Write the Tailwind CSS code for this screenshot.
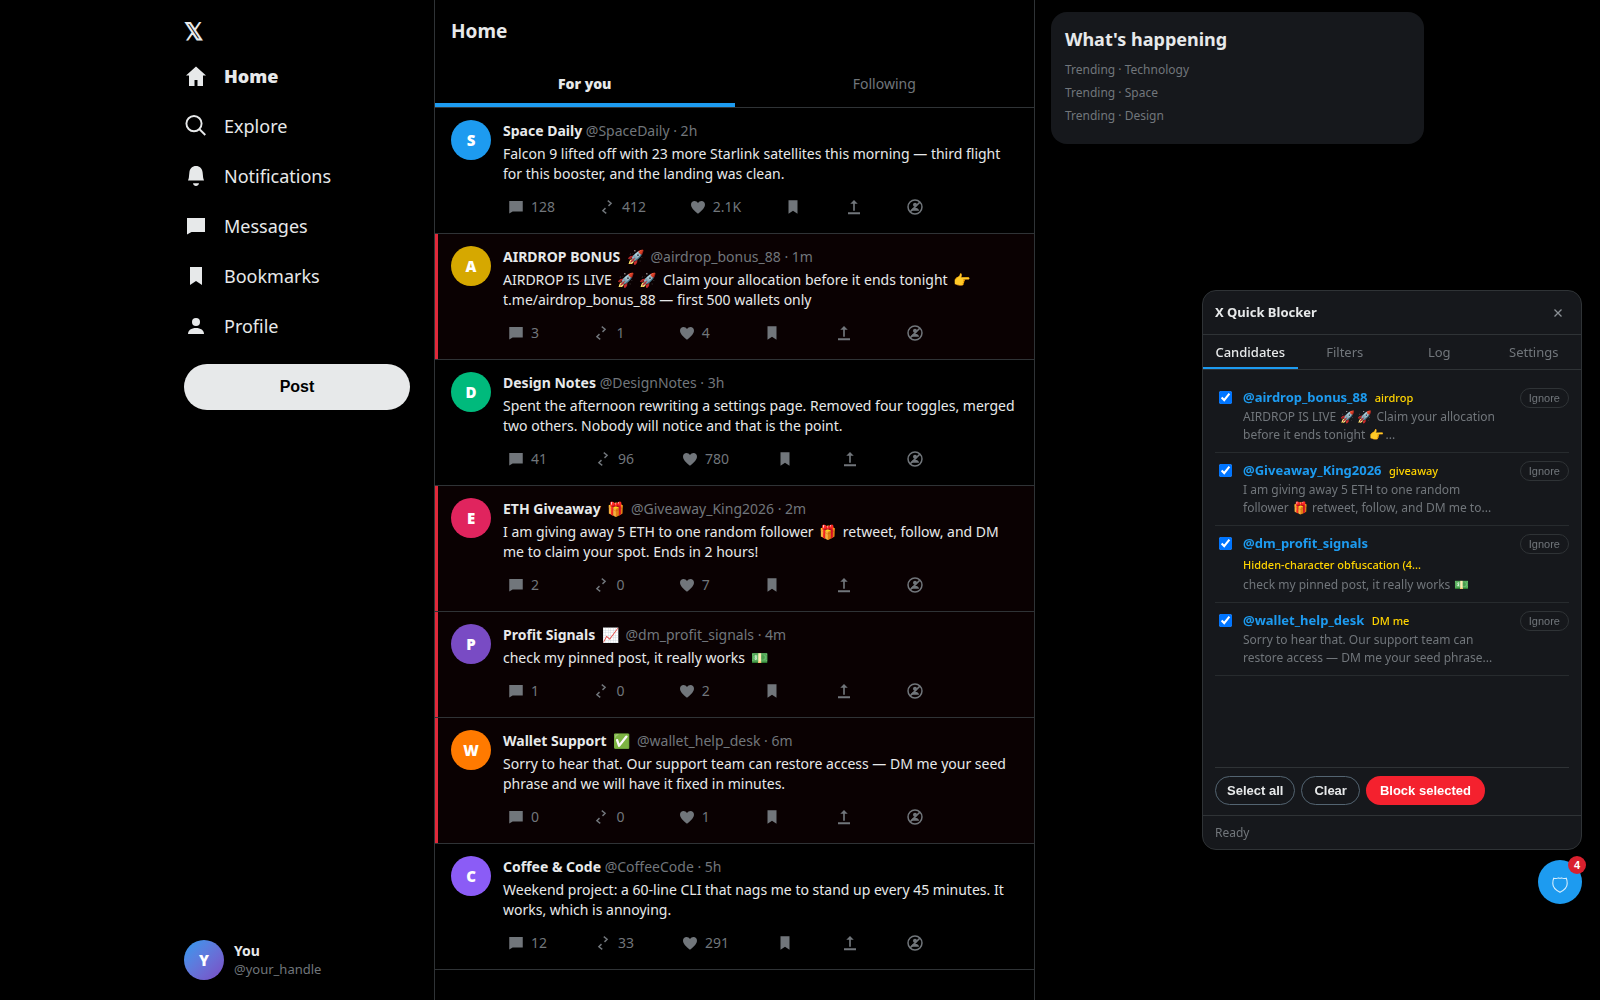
<!DOCTYPE html>
<html lang="en">
<head>
<meta charset="UTF-8">
<meta name="viewport" content="width=device-width, initial-scale=1.0">
<title>Home / X</title>
<script src="https://cdn.jsdelivr.net/npm/@tailwindcss/browser@4"></script>
</head>
<body class="min-h-screen bg-black text-[#e7e9ea] font-['Noto_Sans','Open_Sans',sans-serif]">

<!-- Icons -->
<svg class="hidden" xmlns="http://www.w3.org/2000/svg">
  <symbol id="i-home" viewBox="0 0 24 24"><path d="M12 2.500 2 11.500h3V22h5.500v-6h3v6H19V11.500h3z"/></symbol>
  <symbol id="i-search" viewBox="0 0 24 24"><path d="M10 2a7.600 7.600 0 1 0 0 15.200 7.600 7.600 0 1 0 0-15.200zm5.500 13.300 5.800 5.700" fill="none" stroke="currentColor" stroke-width="1.900"/></symbol>
  <symbol id="i-bell" viewBox="0 0 24 24"><path d="M12 2c-3.700 0-6.300 2.700-6.600 6.300L4.800 14 4 16.500h16l-.8-2.500-.6-5.700C18.300 4.700 15.700 2 12 2zM9 19.200h6c-.3 1.800-1.500 2.800-3 2.800s-2.700-1-3-2.800z"/></symbol>
  <symbol id="i-comment" viewBox="0 0 24 24"><path d="M3 4h18v14H7.500L3 20.500z"/></symbol>
  <symbol id="i-bookmark" viewBox="0 0 24 24"><path d="M6 3h12v18l-6-4-6 4z"/></symbol>
  <symbol id="i-user" viewBox="0 0 24 24"><circle cx="12" cy="8" r="4"/><path d="M4 20c0-3.800 3.300-6 8-6s8 2.200 8 6z"/></symbol>
  <symbol id="i-retweet" viewBox="0 0 24 24"><path d="m13 3.500 4.500 3.500-3.500 3.500M11 20.500 6.500 17l3.500-3.500" fill="none" stroke="currentColor" stroke-width="1.900"/></symbol>
  <symbol id="i-heart" viewBox="0 0 24 24"><path d="M12 21C6 16 2.700 13 2.700 8.700 2.700 5.800 4.800 4 7.300 4 9.200 4 11 5 12 6.800 13 5 14.800 4 16.700 4c2.500 0 4.600 1.800 4.600 4.700C21.300 13 18 16 12 21z"/></symbol>
  <symbol id="i-share" viewBox="0 0 24 24"><path d="m12 2.500 5 5.300h-3.900V17h-2.200V7.800H7zM4 19h16v2.800H4z"/></symbol>
  <symbol id="i-block" viewBox="0 0 24 24"><circle cx="12" cy="12" r="9.300" fill="none" stroke="currentColor" stroke-width="2"/><circle cx="12" cy="9" r="2.700"/><path d="M6.500 17c.5-2.700 2.500-4 5.500-4s5 1.300 5.500 4z"/><path d="M18.500 5.500l-13 13" stroke="currentColor" stroke-width="2"/></symbol>
</svg>

<div class="mx-auto grid min-h-screen max-w-[1264px] grid-cols-[266px_minmax(0,601px)_minmax(0,1fr)]">

  <!-- Sidebar -->
  <header class="sticky top-0 flex h-screen flex-col pl-4 pr-6 pt-4 pb-5">
    <a href="#" aria-label="X" class="flex h-[30px] items-center text-2xl leading-[30px] font-bold">𝕏</a>
    <nav class="mt-[5px] flex flex-col text-lg">
      <a href="#" class="flex h-[50px] items-center gap-4 font-black"><svg class="size-6 fill-current"><use href="#i-home"/></svg>Home</a>
      <a href="#" class="flex h-[50px] items-center gap-4"><svg class="size-6 fill-current"><use href="#i-search"/></svg>Explore</a>
      <a href="#" class="flex h-[50px] items-center gap-4"><svg class="size-6 fill-current"><use href="#i-bell"/></svg>Notifications</a>
      <a href="#" class="flex h-[50px] items-center gap-4"><svg class="size-6 fill-current"><use href="#i-comment"/></svg>Messages</a>
      <a href="#" class="flex h-[50px] items-center gap-4"><svg class="size-6 fill-current"><use href="#i-bookmark"/></svg>Bookmarks</a>
      <a href="#" class="flex h-[50px] items-center gap-4"><svg class="size-6 fill-current"><use href="#i-user"/></svg>Profile</a>
    </nav>
    <button class="mt-[13px] h-[46px] rounded-full bg-[#e7e9ea] font-['Liberation_Sans',sans-serif] text-base font-bold text-black">Post</button>
    <div class="mt-auto flex items-center gap-[10px]">
      <div class="flex size-10 items-center justify-center rounded-full bg-linear-135 from-[#1d9bf0] to-[#794bc4] text-[15px] font-black text-white">Y</div>
      <div>
        <div class="text-sm leading-[19px] font-bold">You</div>
        <div class="text-[13px] leading-[19px] text-[#71767b]">@your_handle</div>
      </div>
    </div>
  </header>

  <!-- Timeline -->
  <main class="border-x border-[#2f3336]">
    <h1 class="px-4 pt-4 text-[19px] leading-[30px] font-bold">Home</h1>
    <div class="mt-4 flex h-[46px] border-b border-[#2f3336] text-sm" role="tablist">
      <button role="tab" aria-selected="true" class="flex-1 border-b-4 border-[#1d9bf0] pt-[3px] font-black">For you</button>
      <button role="tab" aria-selected="false" class="flex-1 pb-px text-[#71767b]">Following</button>
    </div>
    <div id="timeline"></div>
  </main>

  <!-- Trends -->
  <aside class="pt-3 pl-4 pr-2">
    <section class="rounded-2xl bg-[#16181c] px-[14px] pt-3 pb-[17px]">
      <h2 class="text-lg leading-[30px] font-bold">What's happening</h2>
      <ul class="mt-1 text-xs leading-[23px] text-[#71767b]">
        <li>Trending · Technology</li>
        <li>Trending · Space</li>
        <li>Trending · Design</li>
      </ul>
    </section>
  </aside>
</div>

<!-- Blocker panel -->
<section class="fixed right-[18px] bottom-[150px] flex h-[560px] w-[380px] flex-col overflow-hidden rounded-[14px] border border-[#2f3336] bg-[#16181c]">
  <div class="flex h-11 items-center justify-between border-b border-[#2f3336] pr-[11px] pl-3">
    <h2 class="text-[13px] font-bold">X Quick Blocker</h2>
    <button aria-label="Close" class="flex size-6 items-center justify-center text-[#8b9095]">
      <svg class="size-2" viewBox="0 0 8 8"><path d="M.5.5l7 7M7.500.5l-7 7" fill="none" stroke="currentColor" stroke-width="1.300"/></svg>
    </button>
  </div>
  <div class="flex h-[35px] shrink-0 border-b border-[#2f3336] text-[13px]" role="tablist">
    <button role="tab" aria-selected="true" class="flex-1 border-b-2 border-[#1d9bf0] pt-1 font-medium">Candidates</button>
    <button role="tab" aria-selected="false" class="flex-1 pt-[2px] text-[#71767b]">Filters</button>
    <button role="tab" aria-selected="false" class="flex-1 pt-[2px] text-[#71767b]">Log</button>
    <button role="tab" aria-selected="false" class="flex-1 pt-[2px] text-[#71767b]">Settings</button>
  </div>
  <ul id="candidates" class="flex-1 overflow-y-auto px-3 pt-[10px]"></ul>
  <div class="mx-3 flex h-12 items-center gap-[6px] border-t border-[#2f3336] pb-[2px] font-['Liberation_Sans',sans-serif] text-[13px] font-bold">
    <button class="h-[29px] rounded-full border border-[#536471] px-[11px]">Select all</button>
    <button class="h-[29px] rounded-full border border-[#536471] px-3">Clear</button>
    <button class="h-[29px] rounded-full bg-[#f4212e] px-[14px] text-white">Block selected</button>
  </div>
  <div class="h-[34px] border-t border-[#2f3336] px-3 text-xs leading-[33px] text-[#71767b]">Ready</div>
</section>

<!-- Floating button -->
<button aria-label="Open blocker" class="fixed right-[18px] bottom-24 flex size-11 items-center justify-center rounded-full bg-[#1d9bf0] pt-[6px]">
  <svg class="size-4" viewBox="0 0 16 16"><path d="M8 15.300C3.500 13 .8 10 .8 6.500c0-2 .2-3.800.9-5.300C3.500 1.700 5 1.700 6.300.9 7.400 1.400 8.600 1.400 9.700.9c1.300.8 2.800.8 4.600.3.7 1.500.9 3.300.9 5.300 0 3.500-2.700 6.500-7.200 8.800z" fill="none" stroke="#d8eefc" stroke-width="1.100"/></svg>
  <span class="absolute -top-1 -right-1 flex size-[18px] items-center justify-center rounded-full bg-[#d9202e] font-['Liberation_Sans',sans-serif] text-[11px] font-bold text-white">4</span>
</button>

<script>
const tweets = [
  { i:"S", color:"#1d9bf0", name:"Space Daily", handle:"@SpaceDaily · 2h", text:"Falcon 9 lifted off with 23 more Starlink satellites this morning — third flight<br>for this booster, and the landing was clean.", n:["128","412","2.1K"] },
  { i:"A", color:"#d6a800", name:"AIRDROP BONUS 🚀", handle:"@airdrop_bonus_88 · 1m", text:"AIRDROP IS LIVE 🚀🚀 Claim your allocation before it ends tonight 👉<br>t.me/airdrop_bonus_88 — first 500 wallets only", n:["3","1","4"], spam:true },
  { i:"D", color:"#00ba7c", name:"Design Notes", handle:"@DesignNotes · 3h", text:"Spent the afternoon rewriting a settings page. Removed four toggles, merged<br>two others. Nobody will notice and that is the point.", n:["41","96","780"] },
  { i:"E", color:"#e0245e", name:"ETH Giveaway 🎁", handle:"@Giveaway_King2026 · 2m", text:"I am giving away 5 ETH to one random follower 🎁 retweet, follow, and DM<br>me to claim your spot. Ends in 2 hours!", n:["2","0","7"], spam:true },
  { i:"P", color:"#794bc4", name:"Profit Signals 📈", handle:"@dm_profit_signals · 4m", text:"check my pinned post, it really works 💵", n:["1","0","2"], spam:true },
  { i:"W", color:"#ff7a00", name:"Wallet Support ✅", handle:"@wallet_help_desk · 6m", text:"Sorry to hear that. Our support team can restore access — DM me your seed<br>phrase and we will have it fixed in minutes.", n:["0","0","1"], spam:true },
  { i:"C", color:"#8b5cf6", name:"Coffee &amp; Code", handle:"@CoffeeCode · 5h", text:"Weekend project: a 60-line CLI that nags me to stand up every 45 minutes. It<br>works, which is annoying.", n:["12","33","291"] },
];

const candidates = [
  { handle:"@airdrop_bonus_88", tag:"airdrop", text:"AIRDROP IS LIVE 🚀🚀 Claim your allocation<br>before it ends tonight 👉..." },
  { handle:"@Giveaway_King2026", tag:"giveaway", text:"I am giving away 5 ETH to one random<br>follower 🎁 retweet, follow, and DM me to..." },
  { handle:"@dm_profit_signals", tag:"Hidden-character obfuscation (4...", wrap:true, text:"check my pinned post, it really works 💵" },
  { handle:"@wallet_help_desk", tag:"DM me", text:"Sorry to hear that. Our support team can<br>restore access — DM me your seed phrase..." },
];

// give each emoji a little room on both sides
function emoji(s, cls){
  return s.replace(/\p{Emoji_Presentation}/gu, e => `<span class="${cls}">${e}</span>`);
}

function action(icon, label, count){
  return `<button aria-label="${label}" class="flex items-center gap-[6px] px-1"><svg class="size-[18px] fill-current"><use href="#i-${icon}"/></svg>${count ? `<span>${count}</span>` : ""}</button>`;
}

document.getElementById("timeline").innerHTML = tweets.map(t => `
  <article class="flex gap-3 border-b border-[#2f3336] px-4 py-3 ${t.spam ? "bg-[#f4212e]/4 shadow-[inset_3px_0_0_#e0293a]" : ""}">
    <div class="flex size-10 shrink-0 items-center justify-center rounded-full text-[15px] font-black text-white" style="background:${t.color}">${t.i}</div>
    <div class="min-w-0 flex-1 text-sm">
      <div class="h-[22px] leading-[22px] whitespace-nowrap"><span class="font-bold">${emoji(t.name, "mx-[3px]")}</span> <span class="text-[#71767b]">${t.handle}</span></div>
      <p class="mt-[2px] leading-5 whitespace-nowrap">${emoji(t.text, "mr-[3px] ml-[2px]")}</p>
      <div class="mt-2 flex h-[29px] max-w-[425px] justify-between text-[#71767b]">
        ${action("comment","Reply",t.n[0])}${action("retweet","Repost",t.n[1])}${action("heart","Like",t.n[2])}${action("bookmark","Bookmark")}${action("share","Share")}${action("block","Block")}
      </div>
    </div>
  </article>`).join("");

document.getElementById("candidates").innerHTML = candidates.map((c, n) => `
  <li class="flex border-b border-[#2f3336]/70 py-2">
    <input type="checkbox" id="c${n}" checked class="mt-[3px] ml-1 mr-[11px] size-[13px] shrink-0 accent-[#0075ff]">
    <div class="min-w-0 flex-1 text-xs leading-[18px] whitespace-nowrap">
      <label for="c${n}" class="block h-5 text-[13px] leading-[18px]"><span class="font-bold text-[#1d9bf0]">${c.handle}</span>${c.wrap ? "" : ` <span class="ml-1 text-[11px] font-medium text-[#ffd400]">${c.tag}</span>`}</label>
      ${c.wrap ? `<div class="text-[11px] leading-[22px] font-medium text-[#ffd400]">${c.tag}</div>` : ""}
      <p class="text-[#71767b]">${emoji(c.text, "mx-px")}</p>
    </div>
    <button class="h-5 shrink-0 rounded-full border border-[#2f3336] px-2 font-['Liberation_Sans',sans-serif] text-[11px] text-[#71767b]">Ignore</button>
  </li>`).join("");
</script>
</body>
</html>
